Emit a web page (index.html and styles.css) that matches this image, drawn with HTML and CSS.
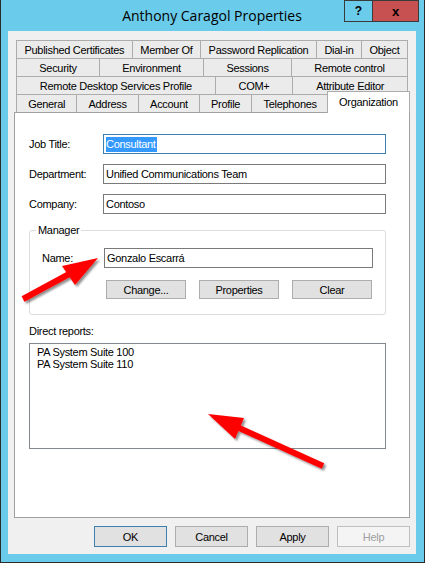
FILE: index.html
```html
<!DOCTYPE html>
<html lang="en">
<head>
    <meta charset="UTF-8">
    <meta name="viewport" content="width=device-width, initial-scale=1.0">
    <title>Anthony Caragol Properties</title>
    <link rel="stylesheet" href="styles.css">
</head>
<body>
    <div class="window">
        <div class="titlebar">
            <span class="title">Anthony Caragol Properties</span>
            <div class="caption-buttons">
                <span class="cap-help">?</span>
                <span class="cap-close">x</span>
            </div>
        </div>

        <div class="client">
            <div class="tabs">
                <div class="tab-row">
                    <span class="tab">Published Certificates</span>
                    <span class="tab">Member Of</span>
                    <span class="tab">Password Replication</span>
                    <span class="tab">Dial-in</span>
                    <span class="tab">Object</span>
                </div>
                <div class="tab-row">
                    <span class="tab">Security</span>
                    <span class="tab">Environment</span>
                    <span class="tab">Sessions</span>
                    <span class="tab">Remote control</span>
                </div>
                <div class="tab-row">
                    <span class="tab">Remote Desktop Services Profile</span>
                    <span class="tab">COM+</span>
                    <span class="tab">Attribute Editor</span>
                </div>
                <div class="tab-row">
                    <span class="tab">General</span>
                    <span class="tab">Address</span>
                    <span class="tab">Account</span>
                    <span class="tab">Profile</span>
                    <span class="tab">Telephones</span>
                    <span class="tab active">Organization</span>
                </div>
            </div>

            <div class="panel">
                <div class="field">
                    <label>Job Title:</label>
                    <div class="textbox focused"><span class="selected-text">Consultant</span></div>
                </div>
                <div class="field">
                    <label>Department:</label>
                    <div class="textbox">Unified Communications Team</div>
                </div>
                <div class="field">
                    <label>Company:</label>
                    <div class="textbox">Contoso</div>
                </div>

                <fieldset class="group">
                    <legend>Manager</legend>
                    <div class="field manager-name">
                        <label>Name:</label>
                        <div class="textbox">Gonzalo Escarrá</div>
                    </div>
                    <div class="manager-buttons">
                        <button class="btn small">Change...</button>
                        <button class="btn small">Properties</button>
                        <button class="btn small">Clear</button>
                    </div>
                </fieldset>

                <div class="reports-label">Direct reports:</div>
                <div class="listbox">
                    <div class="list-item">PA System Suite 100</div>
                    <div class="list-item">PA System Suite 110</div>
                </div>
            </div>

            <div class="dialog-buttons">
                <button class="btn default">OK</button>
                <button class="btn">Cancel</button>
                <button class="btn">Apply</button>
                <button class="btn" disabled>Help</button>
            </div>
        </div>

        <!-- callout arrows drawn over the dialog -->
        <svg class="arrows" width="425" height="563" viewBox="0 0 425 563">
            <defs>
                <filter id="shadow" x="-20%" y="-20%" width="140%" height="140%">
                    <feDropShadow dx="2" dy="2" stdDeviation="1.2" flood-color="#000" flood-opacity="0.45"/>
                </filter>
            </defs>
            <g filter="url(#shadow)" fill="#ff0000">
                <line x1="22" y1="299" x2="70" y2="273" stroke="#ff0000" stroke-width="6"/>
                <polygon points="97,258 61,266 74,285"/>
                <line x1="322" y1="466" x2="236" y2="427" stroke="#ff0000" stroke-width="6"/>
                <polygon points="207,414 243,418 234,439"/>
            </g>
        </svg>
    </div>
</body>
</html>
```

FILE: styles.css
```css
body {
    margin: 0;
    font-family: "Liberation Sans", Arial, sans-serif;
    font-size: 11px;
    letter-spacing: -0.3px;
    color: #000;
}
.window {
    position: relative;
    width: 425px;
    height: 563px;
    box-sizing: border-box;
    background: #6bcbea;
    border: 1px solid #2b2b2b;
    border-top: none;
    padding: 0 8px 8px 7px;
}
.titlebar {
    height: 31px;
    display: flex;
    align-items: center;
    justify-content: center;
}
.title {
    font-family: "Open Sans", "Noto Sans", sans-serif;
    font-size: 14px;
    letter-spacing: 0;
    margin-top: -1px;
}
.caption-buttons {
    position: absolute;
    top: 0;
    right: 5px;
    display: flex;
}
.caption-buttons span {
    height: 20px;
    border: 1px solid #3a3a3a;
    display: flex;
    align-items: center;
    justify-content: center;
    font-weight: bold;
    font-size: 12px;
    letter-spacing: 0;
}
.cap-help {
    width: 27px;
}
.cap-close {
    width: 45px;
    margin-left: -1px;
    background: #c75050;
    font-size: 13px !important;
}
.client {
    height: 523px;
    box-sizing: border-box;
    background: #f0f0f0;
    padding: 9px 6px 7px 6px;
    display: flex;
    flex-direction: column;
}
.tabs {
    margin: 0 2px;
}
.tab-row {
    display: flex;
    height: 18px;
}
.tab {
    flex: 1 1 auto;
    height: 18px;
    box-sizing: border-box;
    padding: 0 6px;
    background: #ebebeb;
    border: 1px solid #acacac;
    border-bottom: none;
    margin-left: -1px;
    display: flex;
    align-items: center;
    justify-content: center;
    white-space: nowrap;
}
.tab:first-child {
    margin-left: 0;
}
.tab.active {
    position: relative;
    z-index: 1;
    background: #fff;
    height: 22px;
    margin: -3px -2px 0 -2px;
    padding-bottom: 2px;
}
.panel {
    height: 406px;
    box-sizing: border-box;
    background: #fff;
    border: 1px solid #a0a0a0;
    padding: 21px 23px 0 14px;
}
.field {
    display: flex;
    align-items: center;
    height: 20px;
    margin-bottom: 10px;
}
.field label {
    width: 74px;
    flex: none;
}
.textbox {
    flex: 1;
    height: 20px;
    box-sizing: border-box;
    border: 1px solid #7a7a7a;
    padding: 0 2px;
    display: flex;
    align-items: center;
    white-space: nowrap;
}
.textbox.focused {
    border-color: #3c7fb1;
}
.selected-text {
    background: #3399ff;
    color: #fff;
    padding: 1px 1px 2px 0;
}
.group {
    margin: 0;
    padding: 11px 12px 15px 12px;
    border: 1px solid #dcdcdc;
    border-radius: 3px;
}
.group legend {
    margin-left: -6px;
    padding: 0 2px;
    line-height: 13px;
}
.manager-name {
    margin-bottom: 12px;
}
.manager-name label {
    width: 62px;
}
.manager-buttons {
    display: flex;
    justify-content: space-between;
    margin-left: 64px;
    margin-right: 1px;
}
.btn {
    font-family: "Liberation Sans", Arial, sans-serif;
    font-size: 11px;
    letter-spacing: -0.3px;
    color: #000;
    width: 73px;
    height: 21px;
    padding: 0;
    background: #e1e1e1;
    border: 1px solid #adadad;
    border-radius: 0;
}
.btn.small {
    width: 80px;
    height: 19px;
}
.btn.default {
    border-color: #3c7fb1;
}
.btn:disabled {
    background: #f4f4f4;
    border-color: #bfbfbf;
    color: #a0a0a0;
}
.reports-label {
    margin-top: 10px;
    line-height: 13px;
}
.listbox {
    margin-top: 5px;
    height: 106px;
    box-sizing: border-box;
    border: 1px solid #828790;
    padding: 2px 7px;
}
.list-item {
    line-height: 12px;
}
.dialog-buttons {
    display: flex;
    justify-content: flex-end;
    gap: 8px;
    margin-top: 8px;
}
.arrows {
    position: absolute;
    left: 0;
    top: 0;
    pointer-events: none;
}
```
